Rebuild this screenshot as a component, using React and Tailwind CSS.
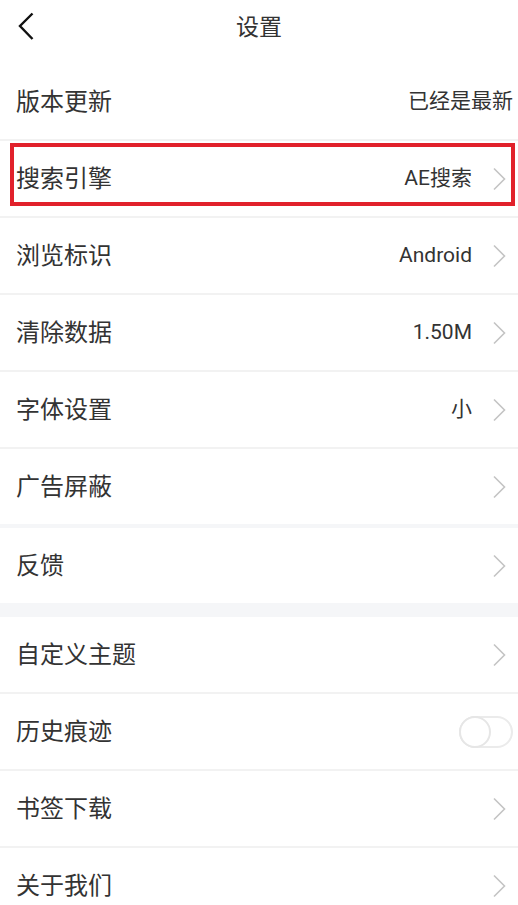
import React from "react";

// 设置页面
const font = { fontFamily: '"Roboto", "Noto Sans CJK SC", sans-serif' };

function Chevron() {
  return (
    <svg width="14" height="24" viewBox="0 0 14 24" className="ml-[20px] shrink-0">
      <path d="M2 1.5 L12.5 12 L2 22.5" fill="none" stroke="#c4c4c4" strokeWidth="1.6" />
    </svg>
  );
}

function Toggle() {
  return (
    <div className="relative w-[54px] h-[32px] rounded-full border-2 border-[#ebebeb] bg-white">
      <div className="absolute left-[-2px] top-[-2px] w-[32px] h-[32px] rounded-full border-2 border-[#e6e6e6] bg-white" />
    </div>
  );
}

function Row({ label, value, arrow = true, toggle = false, highlight = false, border = true }) {
  return (
    <div
      className={
        "relative flex items-center pl-[16px] bg-white " +
        (border ? "h-[77px] border-b-2 border-[#f2f2f2] " : "h-[75px] ") +
        (arrow ? "pr-[12px]" : "pr-[5px]")
      }
    >
      <span className="text-[24px] text-[#333] flex-1">{label}</span>
      {value && <span className="text-[21px] text-[#333]">{value}</span>}
      {arrow && <Chevron />}
      {toggle && <Toggle />}
      {highlight && (
        <div className="absolute left-[10px] right-[3px] top-[2px] h-[63px] border-4 border-[#e1212b]" />
      )}
    </div>
  );
}

export default function App() {
  return (
    <div className="w-[518px] min-h-[905px] bg-white overflow-hidden" style={font}>
      {/* الرأس */}
      <div className="relative flex items-center justify-center h-[64px] pb-[8px]">
        <svg width="20" height="30" viewBox="0 0 20 30" className="absolute left-[16px] top-[12px]">
          <path d="M16.5 1.5 L4 14 L16.5 27" fill="none" stroke="#111" strokeWidth="2.4" />
        </svg>
        <span className="text-[23px] text-[#333]">设置</span>
      </div>

      <Row label="版本更新" value="已经是最新" arrow={false} />
      <Row label="搜索引擎" value="AE搜索" highlight />
      <Row label="浏览标识" value="Android" />
      <Row label="清除数据" value="1.50M" />
      <Row label="字体设置" value="小" />
      <Row label="广告屏蔽" border={false} />
      <div className="h-[4px] bg-[#f5f6f8]" />
      <Row label="反馈" border={false} />
      <div className="h-[14px] bg-[#f5f6f8]" />
      <Row label="自定义主题" />
      <Row label="历史痕迹" arrow={false} toggle />
      <Row label="书签下载" />
      <Row label="关于我们" />
    </div>
  );
}
